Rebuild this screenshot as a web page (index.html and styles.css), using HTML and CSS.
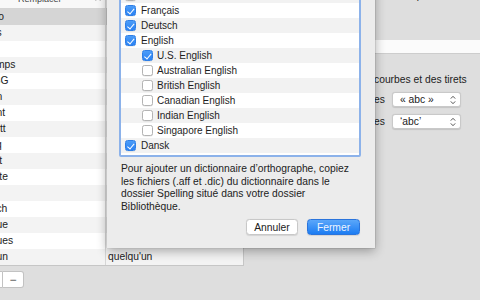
FILE: index.html
```html
<!DOCTYPE html>
<html lang="fr">
<head>
  <meta charset="UTF-8" />
  <title>Texte</title>
  <link rel="stylesheet" href="styles.css">
</head>
<body>
  <div class="window">
    <div class="left-pane">
      <div class="replacements">
        <div class="row head">
          <div class="cell">Remplacer <span class="sort"></span></div>
          <div class="cell">Avec</div>
        </div>
        <div class="row selected"><div class="cell">ciao</div><div class="cell">Ciao !</div></div>
        <div class="row"><div class="cell">dps</div><div class="cell">depuis</div></div>
        <div class="row"><div class="cell">dsl</div><div class="cell">désolé</div></div>
        <div class="row"><div class="cell">ltemps</div><div class="cell">longtemps</div></div>
        <div class="row"><div class="cell">MSG</div><div class="cell">message</div></div>
        <div class="row"><div class="cell">mtn</div><div class="cell">maintenant</div></div>
        <div class="row"><div class="cell">mtnt</div><div class="cell">maintenant</div></div>
        <div class="row"><div class="cell">nortt</div><div class="cell">normalement</div></div>
        <div class="row"><div class="cell">pcq</div><div class="cell">parce que</div></div>
        <div class="row"><div class="cell">ptêt</div><div class="cell">peut-être</div></div>
        <div class="row"><div class="cell">ptete</div><div class="cell">peut-être</div></div>
        <div class="row"><div class="cell">qq</div><div class="cell">quelques</div></div>
        <div class="row"><div class="cell">qqch</div><div class="cell">quelque chose</div></div>
        <div class="row"><div class="cell">qque</div><div class="cell">quelque</div></div>
        <div class="row"><div class="cell">qques</div><div class="cell">quelques</div></div>
        <div class="row"><div class="cell">qqun</div><div class="cell">quelqu'un</div></div>
      </div>
      <div class="seg">
        <button class="seg-btn">+</button>
        <button class="seg-btn">&minus;</button>
      </div>
    </div>

    <div class="text-pane">
      <div class="check-line"><span class="cb on"></span>Corriger l'orthographe automatiquement</div>
      <div class="band"></div>
      <div class="check-line quotes-title"><span class="cb on"></span>Utiliser des guillemets courbes et des tirets</div>
      <div class="quote-row">
        <span class="quote-label">Doubles</span>
        <div class="popup">« abc »<svg class="arrows" width="6" height="10" viewBox="0 0 6 10"><path d="M0.8 3.6 L3 1.3 L5.2 3.6 M0.8 6.4 L3 8.7 L5.2 6.4" fill="none" stroke="#555" stroke-width="1"/></svg></div>
      </div>
      <div class="quote-row">
        <span class="quote-label">Simples</span>
        <div class="popup">‘abc’<svg class="arrows" width="6" height="10" viewBox="0 0 6 10"><path d="M0.8 3.6 L3 1.3 L5.2 3.6 M0.8 6.4 L3 8.7 L5.2 6.4" fill="none" stroke="#555" stroke-width="1"/></svg></div>
      </div>
    </div>
  </div>

  <div class="sheet">
    <div class="lang-list">
      <div class="lang"><span class="cb"></span>Español</div>
      <div class="lang"><span class="cb"></span>Italiano</div>
      <div class="lang"><span class="cb on"></span>Français</div>
      <div class="lang"><span class="cb on"></span>Deutsch</div>
      <div class="lang"><span class="cb on"></span>English</div>
      <div class="lang sub"><span class="cb on"></span>U.S. English</div>
      <div class="lang sub"><span class="cb"></span>Australian English</div>
      <div class="lang sub"><span class="cb"></span>British English</div>
      <div class="lang sub"><span class="cb"></span>Canadian English</div>
      <div class="lang sub"><span class="cb"></span>Indian English</div>
      <div class="lang sub"><span class="cb"></span>Singapore English</div>
      <div class="lang"><span class="cb on"></span>Dansk</div>
      <div class="lang"><span class="cb"></span>Nederlands</div>
    </div>
    <p class="hint">Pour ajouter un dictionnaire d’orthographe, copiez<br>les fichiers (.aff et .dic) du dictionnaire dans le<br>dossier Spelling situé dans votre dossier<br>Bibliothèque.</p>
    <div class="actions">
      <button class="btn">Annuler</button>
      <button class="btn primary">Fermer</button>
    </div>
  </div>
</body>
</html>
```

FILE: styles.css
```css
body {
  margin: 0;
  width: 480px;
  height: 300px;
  overflow: hidden;
  position: relative;
  background: #dedede;
  font-family: "Liberation Sans", Arial, sans-serif;
  font-size: 10.3px;
  color: #222;
}

.window { display: flex; margin-top: -9px; }

/* replacement table */
.left-pane { margin-left: -19px; width: 263px; flex: none; }
.replacements { background: #fff; border-right: 1px solid #c6c6c6; border-bottom: 1px solid #c6c6c6; }
.row { display: grid; grid-template-columns: 124px 138px; height: 16px; line-height: 16px; }
.row:nth-child(odd) { background: #f3f3f3; }
.row.selected { background: #d5d5d5; }
.cell { padding: 0 4px; white-space: nowrap; overflow: hidden; }
.cell + .cell { border-left: 1px solid #d6d6d6; padding-left: 2px; }
.row.head { height: 17px; line-height: 17px; background: #f8f8f8; border-bottom: 1px solid #d4d4d4; font-size: 9px; color: #444; }
.row.head .cell:first-child { padding-left: 37px; position: relative; }
.sort {
  position: absolute; left: 115px; top: 7px;
  width: 3px; height: 3px;
  border-left: 1px solid #777; border-top: 1px solid #777;
  transform: rotate(45deg);
}

.seg { display: flex; margin: 5px 0 0 1px; }
.seg-btn {
  width: 21px; height: 17px; padding: 0;
  background: #fff; border: 1px solid #c2c2c2;
  font-family: inherit; font-size: 12px; color: #555; line-height: 14px;
}
.seg-btn:first-child { border-radius: 3px 0 0 3px; }
.seg-btn + .seg-btn { border-left: 0; border-radius: 0 3px 3px 0; }

/* text settings behind the sheet */
.text-pane { flex: 1; padding-left: 11px; }
.check-line { display: flex; align-items: center; gap: 5px; height: 13px; line-height: 13px; white-space: nowrap; }
.check-line:first-child { margin-top: -2px; }
.band { height: 13px; margin: 38px 0 0 -11px; background: #fbfbfb; border-bottom: 1px solid #cdcdcd; }
.quotes-title { margin-top: 19px; }
.quote-row { display: flex; align-items: center; gap: 7px; margin-top: 6px; }
.quote-row + .quote-row { margin-top: 7px; }
.quote-label { width: 130px; text-align: right; }
.popup {
  position: relative;
  width: 69px; height: 15px; box-sizing: border-box;
  padding-left: 7px; line-height: 14px;
  background: #fff; border: 1px solid #c9c9c9; border-radius: 3px;
  box-shadow: 0 0.5px 1px rgba(0,0,0,0.12);
}
.arrows { position: absolute; right: 4px; top: 2px; }

/* checkboxes */
.cb {
  flex: none;
  position: relative;
  width: 11px; height: 11px; box-sizing: border-box;
  background: #fff; border: 1px solid #b3b3b3; border-radius: 2.5px;
  box-shadow: 0 0.5px 0.5px rgba(0,0,0,0.1);
}
.cb.on { background: linear-gradient(#4b9cf8, #2b82f3); border-color: #2f7fe6; }
.cb.on::after {
  content: "";
  position: absolute; left: 3px; top: 0.5px;
  width: 2.5px; height: 5.5px;
  border-right: 1.5px solid #fff; border-bottom: 1.5px solid #fff;
  transform: rotate(40deg);
}

/* spelling sheet */
.sheet {
  position: absolute; left: 107px; top: -44px;
  width: 268px; box-sizing: border-box;
  padding: 15px 14px 13px 12px;
  background: #ececec;
  box-shadow: 0 3px 10px rgba(0,0,0,0.32), 0 0 0 0.5px rgba(0,0,0,0.15);
}
.lang-list {
  height: 182px; overflow: hidden;
  background: #fff;
  border: 2px solid #8cb2ea; border-radius: 2px;
}
.lang { display: flex; align-items: center; gap: 5px; height: 15px; padding-left: 4px; color: #1e1e1e; font-size: 10px; }
.lang:nth-child(even) { background: #f2f2f2; }
.lang.sub { padding-left: 21px; gap: 4px; }

.hint { margin: 6px 0 0 2px; line-height: 12.7px; }

.actions { display: flex; justify-content: flex-end; gap: 9px; margin: 5.5px 1px 0 0; }
.btn {
  height: 16px; padding: 0; width: 52px;
  font-family: inherit; font-size: 10.3px; color: #222;
  background: #fff; border: 1px solid #c8c8c8; border-radius: 3.5px;
  box-shadow: 0 0.5px 1px rgba(0,0,0,0.1);
}
.btn.primary { width: 53px; color: #eef5ff; background: linear-gradient(#5ba7fa, #1c7cf2); border-color: #2a74dc; }
```
